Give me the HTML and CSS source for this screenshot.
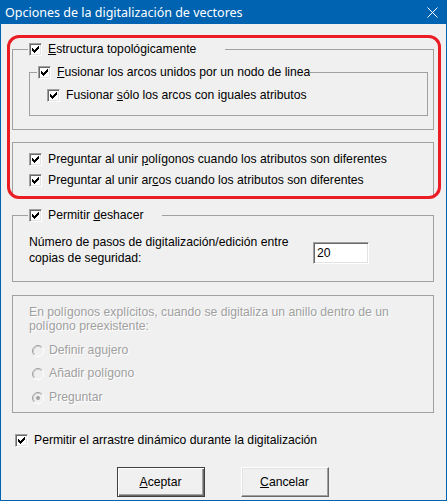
FILE: index.html
```html
<!DOCTYPE html>
<html lang="es">
<head>
<meta charset="utf-8">
<title>Opciones de la digitalización de vectores</title>
<link rel="stylesheet" href="styles.css">
</head>
<body>
<div class="window">
  <div class="titlebar">
    <span class="title">Opciones de la digitalización de vectores</span>
    <svg class="close" width="11" height="11" viewBox="0 0 11 11"><path d="M0.5 0.5 L10.5 10.5 M10.5 0.5 L0.5 10.5" stroke="#fff" stroke-width="1" fill="none"/></svg>
  </div>
  <div class="client">
    <fieldset class="group g1">
      <legend class="legend lg1">
        <span class="cb"><span class="box"><svg class="check" width="7" height="7" viewBox="0 0 7 7"><path d="M6 0h1v3h-1zM5 1h1v3h-1zM4 2h1v3h-1zM3 3h1v3h-1zM2 4h1v3h-1zM1 3h1v3h-1zM0 2h1v3h-1z"/></svg></span><span class="lbl"><u>E</u>structura topológicamente</span></span>
      </legend>
      <div class="body b1">
        <fieldset class="group g1i">
          <legend class="legend lg1i">
            <span class="cb"><span class="box"><svg class="check" width="7" height="7" viewBox="0 0 7 7"><path d="M6 0h1v3h-1zM5 1h1v3h-1zM4 2h1v3h-1zM3 3h1v3h-1zM2 4h1v3h-1zM1 3h1v3h-1zM0 2h1v3h-1z"/></svg></span><span class="lbl"><u>F</u>usionar los arcos unidos por un nodo de linea</span></span>
          </legend>
          <div class="body b1i">
            <div class="cb"><span class="box"><svg class="check" width="7" height="7" viewBox="0 0 7 7"><path d="M6 0h1v3h-1zM5 1h1v3h-1zM4 2h1v3h-1zM3 3h1v3h-1zM2 4h1v3h-1zM1 3h1v3h-1zM0 2h1v3h-1z"/></svg></span><span class="lbl">Fusionar <u>s</u>ólo los arcos con iguales atributos</span></div>
          </div>
        </fieldset>
      </div>
    </fieldset>

    <fieldset class="group g2">
      <div class="body b2">
        <div class="cb"><span class="box"><svg class="check" width="7" height="7" viewBox="0 0 7 7"><path d="M6 0h1v3h-1zM5 1h1v3h-1zM4 2h1v3h-1zM3 3h1v3h-1zM2 4h1v3h-1zM1 3h1v3h-1zM0 2h1v3h-1z"/></svg></span><span class="lbl">Preguntar al unir <u>p</u>olígonos cuando los atributos son diferentes</span></div>
        <div class="cb"><span class="box"><svg class="check" width="7" height="7" viewBox="0 0 7 7"><path d="M6 0h1v3h-1zM5 1h1v3h-1zM4 2h1v3h-1zM3 3h1v3h-1zM2 4h1v3h-1zM1 3h1v3h-1zM0 2h1v3h-1z"/></svg></span><span class="lbl">Preguntar al unir ar<u>c</u>os cuando los atributos son diferentes</span></div>
      </div>
    </fieldset>

    <fieldset class="group g3">
      <legend class="legend lg3">
        <span class="cb"><span class="box"><svg class="check" width="7" height="7" viewBox="0 0 7 7"><path d="M6 0h1v3h-1zM5 1h1v3h-1zM4 2h1v3h-1zM3 3h1v3h-1zM2 4h1v3h-1zM1 3h1v3h-1zM0 2h1v3h-1z"/></svg></span><span class="lbl">Permitir <u>d</u>eshacer</span></span>
      </legend>
      <div class="body b3">
        <div class="steps-label">Número de pasos de digitalización/edición entre copias de seguridad:</div>
        <div class="num">20</div>
      </div>
    </fieldset>

    <fieldset class="group g4">
      <div class="body b4">
        <div class="disabled-text">En polígonos explícitos, cuando se digitaliza un anillo dentro de un polígono preexistente:</div>
        <div class="radio r1"><svg class="rb" width="12" height="12" viewBox="0 0 12 12"><circle cx="6" cy="6" r="5.5" fill="#f0f0f0"/><path d="M2.11 9.89 A5.5 5.5 0 0 1 9.89 2.11" stroke="#a0a0a0" fill="none"/><path d="M9.89 2.11 A5.5 5.5 0 0 1 2.11 9.89" stroke="#ffffff" fill="none"/><path d="M2.82 9.18 A4.5 4.5 0 0 1 9.18 2.82" stroke="#c8c8c8" fill="none"/></svg><span class="rl">Definir agujero</span></div>
        <div class="radio r2"><svg class="rb" width="12" height="12" viewBox="0 0 12 12"><circle cx="6" cy="6" r="5.5" fill="#f0f0f0"/><path d="M2.11 9.89 A5.5 5.5 0 0 1 9.89 2.11" stroke="#a0a0a0" fill="none"/><path d="M9.89 2.11 A5.5 5.5 0 0 1 2.11 9.89" stroke="#ffffff" fill="none"/><path d="M2.82 9.18 A4.5 4.5 0 0 1 9.18 2.82" stroke="#c8c8c8" fill="none"/></svg><span class="rl">Añadir polígono</span></div>
        <div class="radio r3"><svg class="rb" width="12" height="12" viewBox="0 0 12 12"><circle cx="6" cy="6" r="5.5" fill="#f0f0f0"/><path d="M2.11 9.89 A5.5 5.5 0 0 1 9.89 2.11" stroke="#a0a0a0" fill="none"/><path d="M9.89 2.11 A5.5 5.5 0 0 1 2.11 9.89" stroke="#ffffff" fill="none"/><path d="M2.82 9.18 A4.5 4.5 0 0 1 9.18 2.82" stroke="#c8c8c8" fill="none"/><circle cx="6" cy="6" r="2" fill="#a0a0a0"/></svg><span class="rl">Preguntar</span></div>
      </div>
    </fieldset>

    <div class="cb drag"><span class="box"><svg class="check" width="7" height="7" viewBox="0 0 7 7"><path d="M6 0h1v3h-1zM5 1h1v3h-1zM4 2h1v3h-1zM3 3h1v3h-1zM2 4h1v3h-1zM1 3h1v3h-1zM0 2h1v3h-1z"/></svg></span><span class="lbl">Permitir el arrastre dinámico durante la digitalización</span></div>

    <div class="buttons">
      <div class="btn default"><u>A</u>ceptar</div>
      <div class="btn"><u>C</u>ancelar</div>
    </div>
  </div>
  <div class="annot"></div>
</div>
</body>
</html>
```

FILE: styles.css
```css
* { box-sizing: border-box; }
html, body { margin: 0; padding: 0; background: #f0f0f0; }
body {
  font-family: "Liberation Sans", Arial, sans-serif;
  font-size: 12.2px;
  color: #000;
}
.window {
  position: relative;
  width: 447px;
  height: 501px;
  border: 1px solid #0063b1;
  background: #f0f0f0;
  display: flex;
  flex-direction: column;
}
.titlebar {
  height: 23px;
  flex: none;
  background: #0063b1;
  color: #fff;
  display: flex;
  align-items: center;
  justify-content: space-between;
  padding: 0 8px 0 4px;
}
.title {
  font-family: "Noto Sans", "Open Sans", sans-serif;
  font-size: 12.5px;
  white-space: nowrap;
}
.close { display: block; }
.client {
  flex: 1;
  display: flex;
  flex-direction: column;
  padding: 0 12px 0 11px;
}
.group {
  margin: 0;
  padding: 0;
  border: 1px solid #a0a0a0;
  min-width: 0;
}
.legend {
  padding: 0 0 0 1px;
  height: 13px;
  overflow: hidden;
  white-space: nowrap;
}
.cb {
  display: flex;
  align-items: center;
  height: 13px;
  line-height: 13px;
  white-space: nowrap;
}
.box {
  display: block;
  flex: none;
  width: 13px;
  height: 13px;
  padding: 2px;
  margin-right: 6px;
  background: #fff;
  border: 1px solid;
  border-color: #a0a0a0 #ffffff #ffffff #a0a0a0;
  box-shadow: inset 1px 1px 0 #696969, inset -1px -1px 0 #e3e3e3;
}
.check { display: block; fill: #000; }
u { text-decoration: underline; text-underline-offset: 1px; }

/* group 1 */
.g1 { margin-top: 19px; }
.lg1 { margin-left: 15px; width: 197px; }
.b1 { padding: 10px 5px 13px 16px; }
.lg1i { margin-left: 7px; width: 273px; }
.b1i { padding: 10px 0 13px 17px; }

/* group 2 */
.g2 { margin-top: 12px; }
.b2 {
  padding: 10px 0 9px 16px;
  display: flex;
  flex-direction: column;
  gap: 8px;
}

/* group 3 */
.g3 { margin-top: 12px; }
.lg3 { margin-left: 15px; width: 134px; }
.b3 {
  display: flex;
  align-items: flex-start;
  padding: 12px 0 15px 16px;
}
.steps-label {
  width: 276px;
  margin-right: 8px;
  line-height: 16px;
}
.num {
  width: 56px;
  height: 22px;
  margin-top: 8px;
  padding: 0 0 0 3px;
  line-height: 20px;
  background: #fff;
  border: 1px solid;
  border-color: #a0a0a0 #ffffff #ffffff #a0a0a0;
  box-shadow: inset 1px 1px 0 #696969, inset -1px -1px 0 #e3e3e3;
}

/* group 4 */
.g4 { margin-top: 13px; }
.b4 {
  display: flex;
  flex-direction: column;
  padding: 9px 0 8px 16px;
  color: #a0a0a0;
  text-shadow: 1px 1px 0 #ffffff;
}
.disabled-text {
  line-height: 14px;
  max-width: 395px;
}
.radio {
  display: flex;
  align-items: center;
  height: 13px;
  line-height: 13px;
  padding-left: 3px;
  white-space: nowrap;
}
.r1 { margin-top: 11px; }
.r2 { margin-top: 10px; }
.r3 { margin-top: 11px; }
.rb { display: block; flex: none; margin-right: 5px; }

/* bottom */
.drag { margin: 21px 0 0 3px; }
.buttons {
  display: flex;
  justify-content: center;
  gap: 36px;
  margin-top: 20px;
  padding-right: 1px;
}
.btn {
  width: 88px;
  height: 30px;
  display: flex;
  align-items: center;
  justify-content: center;
  background: #f0f0f0;
  border: 1px solid;
  border-color: #ffffff #696969 #696969 #ffffff;
  box-shadow: inset -1px -1px 0 #a0a0a0, inset 1px 1px 0 #e3e3e3;
}
.btn.default {
  border-color: #404040;
  box-shadow: inset 1px 1px 0 #ffffff, inset -1px -1px 0 #696969, inset -2px -2px 0 #a0a0a0;
}

/* red annotation overlay */
.annot {
  position: absolute;
  left: 6px;
  top: 34px;
  width: 434px;
  height: 164px;
  border: 3px solid #ec1c24;
  border-radius: 12px;
  pointer-events: none;
}
```
